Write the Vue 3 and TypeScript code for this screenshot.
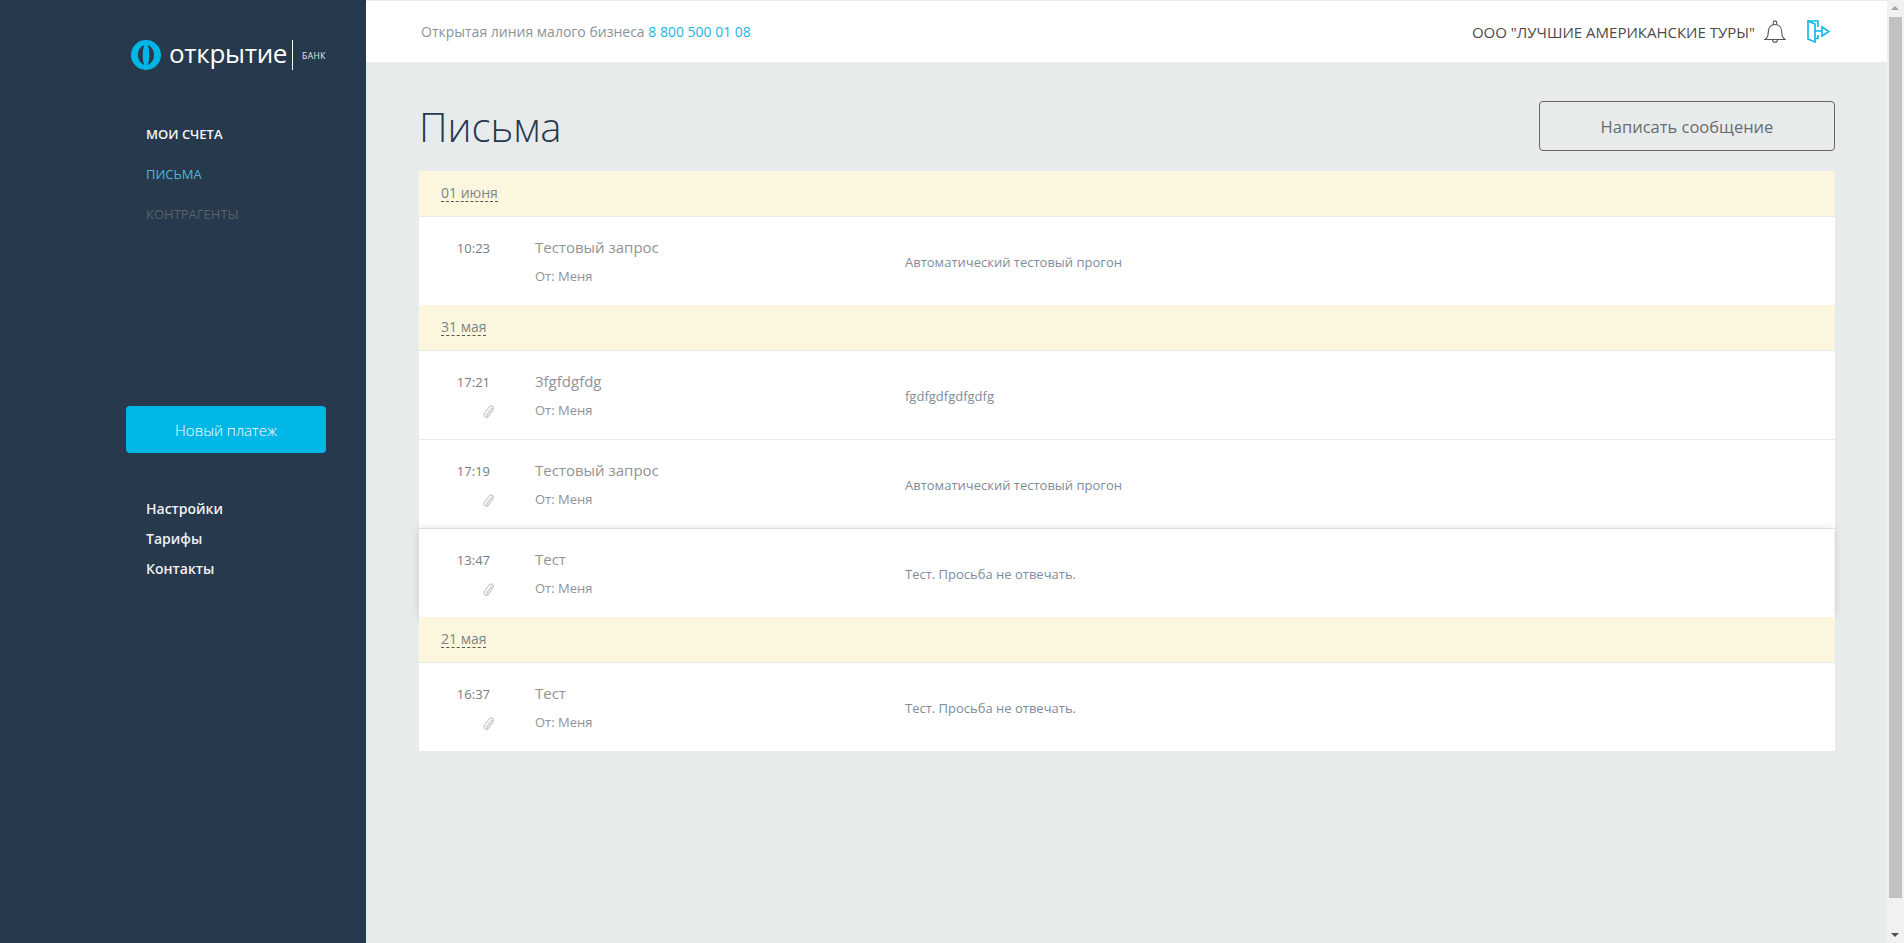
<template>
  <div class="page">
    <aside class="sidebar">
      <div class="logo">
        <svg class="logo-mark" width="30" height="30" viewBox="0 0 30 30">
          <circle cx="15" cy="15" r="15" fill="#00b6e6" />
          <path d="M13.300 5.200C9 6.500 7 10.500 7 15s2 8.500 6.300 9.800C12 22 11.800 18.500 11.800 15s.2-7 1.500-9.800zM16.700 5.200C21 6.500 23 10.500 23 15s-2 8.500-6.300 9.800C18 22 18.200 18.500 18.200 15s-.2-7-1.500-9.800z" fill="#26394d" />
        </svg>
        <span class="logo-name">открытие</span>
        <span class="logo-bank">БАНК</span>
      </div>
      <nav class="top-nav">
        <a class="nav-item">МОИ СЧЕТА</a>
        <a class="nav-item active">ПИСЬМА</a>
        <a class="nav-item disabled">КОНТРАГЕНТЫ</a>
      </nav>
      <button class="pay-btn">Новый платеж</button>
      <nav class="bottom-nav">
        <a>Настройки</a>
        <a>Тарифы</a>
        <a>Контакты</a>
      </nav>
    </aside>

    <div class="main">
      <header class="topbar">
        <div class="hotline">Открытая линия малого бизнеса <span class="phone">8 800 500 01 08</span></div>
        <div class="account">
          <span class="company">ООО "ЛУЧШИЕ АМЕРИКАНСКИЕ ТУРЫ"</span>
          <svg class="bell" width="22" height="24" viewBox="0 0 22 24" fill="none" stroke="#555" stroke-width="1.100">
            <path d="M1 19.500c2.300-1.600 3.200-3.500 3.200-7 0-4.600 2.600-8 6.800-8s6.800 3.400 6.800 8c0 3.500.9 5.400 3.200 7z" />
            <path d="M9.300 4.700V2.600a1.700 1.700 0 0 1 3.400 0v2.100M8.500 19.700c0 3.400 5 3.400 5 0" />
          </svg>
          <svg class="exit" width="23" height="23" viewBox="0 0 23 23" fill="none" stroke="#0cb6e6" stroke-width="1.600">
            <path d="M1 1l7 3v18l-7-3z" />
            <path d="M1 1h10v6M8 18.500h3V15" />
            <path d="M8 11h7V7l7 4.500-7 4.500v-5" />
          </svg>
        </div>
      </header>

      <section class="content">
        <div class="title-row">
          <h1>Письма</h1>
          <button class="write-btn">Написать сообщение</button>
        </div>

        <div class="letters">
          <template v-for="group in groups" :key="group.date">
            <div class="date-band"><span>{{ group.date }}</span></div>
            <div
              v-for="(letter, i) in group.letters"
              :key="letter.time"
              class="letter"
              :class="{ hovered: letter.hovered, last: i === group.letters.length - 1 }"
            >
              <div class="letter-time">
                <div class="time">{{ letter.time }}</div>
                <svg v-if="letter.clip" class="clip" width="11" height="14" viewBox="0 0 11 14" fill="none" stroke="#c4c4c4" stroke-width="1.100">
                  <path d="M9.300 3.800 4 10.600c-1 1.300.6 2.500 1.600 1.300l4-5.400C11.800 3.400 8.500.2 6.200 3L1.600 9c-2 2.800 1.600 6 4 3.200" />
                </svg>
              </div>
              <div class="letter-head">
                <div class="subject">{{ letter.subject }}</div>
                <div class="from">От: Меня</div>
              </div>
              <div class="preview">{{ letter.preview }}</div>
            </div>
          </template>
        </div>
      </section>
    </div>

    <div class="scrollbar">
      <div class="arrow up"></div>
      <div class="thumb"></div>
      <div class="track"></div>
      <div class="arrow down"></div>
    </div>
  </div>
</template>

<script setup lang="ts">
interface Letter {
  time: string
  subject: string
  preview: string
  clip: boolean
  hovered?: boolean
}

interface Group {
  date: string
  letters: Letter[]
}

const autoTest = 'Автоматический тестовый прогон'
const testText = 'Тест. Просьба не отвечать.'

const groups: Group[] = [
  {
    date: '01 июня',
    letters: [{ time: '10:23', subject: 'Тестовый запрос', preview: autoTest, clip: false }],
  },
  {
    date: '31 мая',
    letters: [
      { time: '17:21', subject: '3fgfdgfdg', preview: 'fgdfgdfgdfgdfg', clip: true },
      { time: '17:19', subject: 'Тестовый запрос', preview: autoTest, clip: true },
      { time: '13:47', subject: 'Тест', preview: testText, clip: true, hovered: true },
    ],
  },
  {
    date: '21 мая',
    letters: [{ time: '16:37', subject: 'Тест', preview: testText, clip: true }],
  },
]
</script>

<style>
html,
body {
  margin: 0;
  overflow: hidden;
}
</style>

<style scoped>
.page {
  display: flex;
  height: 943px;
  overflow: hidden;
  background: #e8ebec;
  font-family: "Open Sans", "Noto Sans", sans-serif;
}

.sidebar {
  flex: 0 0 366px;
  background: #26394d;
  display: flex;
  flex-direction: column;
  padding-top: 40px;
  box-sizing: border-box;
}

.logo {
  display: flex;
  align-items: center;
  height: 30px;
  padding-left: 131px;
}

.logo-name {
  width: 116px;
  margin-left: 8px;
  padding-right: 7px;
  border-right: 1px solid #fff;
  height: 30px;
  line-height: 26px;
  font-size: 26px;
  letter-spacing: -0.3px;
  white-space: nowrap;
  color: #fff;
}

.logo-bank {
  margin-left: 9px;
  font-size: 8.500px;
  letter-spacing: 0.5px;
  color: #e6e9ec;
}

.top-nav {
  display: flex;
  flex-direction: column;
  gap: 20px;
  margin-top: 54px;
  padding-left: 146px;
}

.nav-item {
  font-size: 13px;
  line-height: 20px;
  color: #8a8f94;
}

.nav-item:first-child {
  color: #f4f5f6;
  font-weight: 600;
}

.nav-item.active {
  color: #4db8d8;
}

.nav-item.disabled {
  color: #5b6167;
}

.pay-btn {
  width: 200px;
  height: 47px;
  margin: 182px 0 0 126px;
  border: 0;
  border-radius: 4px;
  background: #00b6e6;
  color: #fff;
  font-family: inherit;
  font-size: 15px;
  font-weight: 300;
}

.bottom-nav {
  display: flex;
  flex-direction: column;
  gap: 10px;
  margin-top: 46px;
  padding-left: 146px;
  font-size: 14px;
  line-height: 20px;
  font-weight: 600;
  color: #eef0f2;
}

.main {
  flex: 1;
  min-width: 0;
  display: flex;
  flex-direction: column;
}

.topbar {
  height: 61px;
  border-top: 1px solid #e8ebec;
  background: #fff;
  display: flex;
  align-items: center;
  justify-content: space-between;
  padding: 0 57px 0 55px;
  font-size: 14px;
}

.hotline {
  color: #8b9398;
}

.phone {
  color: #1cb5e5;
}

.account {
  display: flex;
  align-items: center;
}

.company {
  font-size: 15px;
  color: #4a4a4a;
}

.bell {
  margin-left: 9px;
}

.exit {
  margin-left: 21px;
}

.content {
  padding: 0 52px 0 53px;
}

.title-row {
  height: 109px;
  display: flex;
  align-items: center;
  justify-content: space-between;
  padding: 39px 0 20px;
  box-sizing: border-box;
}

h1 {
  margin: 0;
  font-size: 40px;
  font-weight: 300;
  color: #26394d;
}

.write-btn {
  width: 296px;
  height: 50px;
  border: 1px solid #666;
  border-radius: 4px;
  background: transparent;
  color: #6b6b6b;
  font-family: inherit;
  font-size: 16.500px;
}

.letters {
  background: #fff;
}

.date-band {
  position: relative;
  height: 45px;
  padding-left: 22px;
  background: #fcf6df;
  border-bottom: 1px solid #e8ebec;
  display: flex;
  align-items: center;
  font-size: 14px;
  color: #7d8589;
}

.date-band span {
  border-bottom: 1px dashed #555;
  line-height: 16px;
}

.letter {
  display: flex;
  height: 88px;
  background: #fff;
  border-bottom: 1px solid #e8ebec;
}

.letter.last {
  border-bottom: 0;
}

.hovered {
  position: relative;
  width: calc(100% - 1px);
  box-shadow: 0 0 8px rgba(0, 0, 0, 0.14);
}

.letter-time {
  width: 71px;
  padding-top: 21px;
  text-align: right;
  font-size: 13px;
  line-height: 20px;
  color: #727d84;
}

.clip {
  display: block;
  margin: 12px -4px 0 auto;
}

.letter-head {
  width: 370px;
  padding: 19px 0 0 45px;
}

.subject {
  font-size: 15px;
  line-height: 22px;
  color: #8d9499;
}

.from {
  margin-top: 8px;
  font-size: 13px;
  line-height: 20px;
  color: #8d9499;
}

.preview {
  align-self: center;
  margin-top: 2px;
  font-size: 13px;
  color: #7f8c99;
}

.scrollbar {
  flex: 0 0 17px;
  background: #f1f1f1;
  display: flex;
  flex-direction: column;
  align-items: center;
}

.thumb {
  height: 881px;
  width: 13px;
  background: #c1c1c1;
}

.track {
  flex: 1;
}

.arrow {
  height: 17px;
  width: 17px;
  position: relative;
}

.arrow::after {
  content: '';
  position: absolute;
  left: 4px;
  border-left: 4px solid transparent;
  border-right: 4px solid transparent;
}

.arrow.up::after {
  top: 6px;
  border-bottom: 4px solid #a3a3a3;
}

.arrow.down::after {
  top: 7px;
  border-top: 4px solid #505050;
}
</style>
